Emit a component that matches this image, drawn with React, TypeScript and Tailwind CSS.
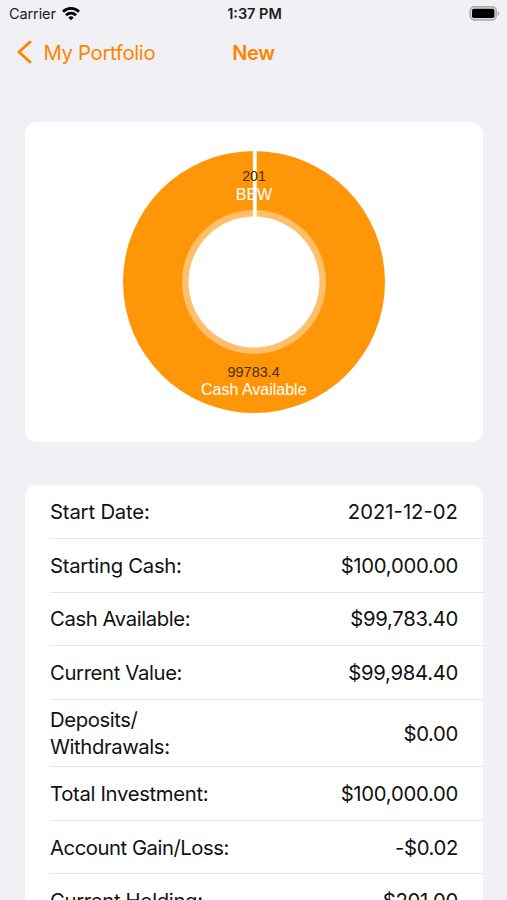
const rows = [
  { label: "Start Date:", labelClass: "tracking-[-0.17px]", value: "2021-12-02", valueClass: "tracking-[0px]" },
  { label: "Starting Cash:", labelClass: "tracking-[-0.28px]", value: "$100,000.00", valueClass: "tracking-[-0.28px]" },
  { label: "Cash Available:", labelClass: "tracking-[-0.4px]", value: "$99,783.40", valueClass: "tracking-[-0.3px]" },
  { label: "Current Value:", labelClass: "tracking-[-0.36px]", value: "$99,984.40", valueClass: "tracking-[-0.3px]" },
  { label: "Deposits/\nWithdrawals:", labelClass: "tracking-[-0.4px]", value: "$0.00", valueClass: "tracking-[-0.35px]" },
  { label: "Total Investment:", labelClass: "tracking-[-0.32px]", value: "$100,000.00", valueClass: "tracking-[-0.28px]" },
  { label: "Account Gain/Loss:", labelClass: "tracking-[-0.47px]", value: "-$0.02", valueClass: "tracking-[-0.35px]" },
  { label: "Current Holding:", labelClass: "tracking-[-0.33px]", value: "$201.00", valueClass: "tracking-[-0.3px]" },
];

function StatusBar() {
  return (
    <div className="grid h-7 grid-cols-3 items-center pl-[9px] pr-[7px] text-[#1c1c1e]">
      <div className="flex items-center gap-[6px]">
        <span className="text-[14.5px] tracking-[-0.1px]">Carrier</span>
        <svg width="18" height="14" viewBox="0 0 18 14" fill="none" stroke="#000" strokeWidth="2.7">
          <path d="M1 4.7a11.4 11.4 0 0 1 16 0" />
          <path d="M4 8.2a7.1 7.1 0 0 1 10 0" />
          <path d="M9 13.2 6.3 10.5a3.9 3.9 0 0 1 5.4 0z" fill="#000" stroke="none" />
        </svg>
      </div>
      <span className="text-center text-[14.5px] font-semibold">1:37 PM</span>
      <svg className="justify-self-end" width="31" height="16" viewBox="0 0 31 16">
        <rect x="1.2" y="0.8" width="26" height="13.2" rx="4" fill="#dcdcde" stroke="#a9a9ac" strokeWidth="1.4" />
        <rect x="3" y="2.7" width="22.4" height="9.4" rx="1.8" fill="#000" />
        <path d="M28.6 5.2c2.2.7 2.2 3.9 0 4.6z" fill="#a9a9ac" />
      </svg>
    </div>
  );
}

function NavBar() {
  return (
    <div className="grid h-12 grid-cols-[1fr_auto_1fr] items-center text-[#ff8400]">
      <div className="flex items-center gap-[11.5px] pl-[17px]">
        <svg width="15" height="24" viewBox="0 0 15 24" fill="none" stroke="currentColor" strokeWidth="2.9" strokeLinecap="round" strokeLinejoin="round">
          <path d="M13 2 2 12l11 10" />
        </svg>
        <span className="whitespace-nowrap pt-0.5 text-[20.3px] tracking-[-0.33px]">My Portfolio</span>
      </div>
      <span className="pt-px text-[20px] font-semibold tracking-[-0.3px]">New</span>
    </div>
  );
}

function AllocationChart() {
  return (
    <svg width="458" height="320" viewBox="0 0 458 320" textAnchor="middle">
      <circle cx="229" cy="160" r="131" fill="#ff9608" />
      <circle cx="229" cy="160" r="72" fill="#ffbf6b" />
      <circle cx="229" cy="160" r="65.5" fill="#fff" />
      <rect x="227.9" y="28" width="3.8" height="68" fill="#fff" />
      <g className="font-['Liberation_Sans',Arial,sans-serif]">
        <text x="229" y="59.2" fontSize="14.2" fill="#4b2d07">201</text>
        <text x="229" y="77.6" fontSize="16" fill="#fff">BBW</text>
        <text x="228.7" y="255" fontSize="14.5" fill="#4b2d07">99783.4</text>
        <text x="228.8" y="273.3" fontSize="16" fill="#fff">Cash Available</text>
      </g>
    </svg>
  );
}

export default function App() {
  return (
    <div className="h-[900px] w-[507px] overflow-hidden bg-[#f1f0f5] font-[Inter,'Liberation_Sans',sans-serif]">
      <StatusBar />
      <NavBar />
      <main className="pl-[25px] pr-6 pt-[46px]">
        <section className="h-80 overflow-hidden rounded-xl bg-white">
          <AllocationChart />
        </section>
        <section className="mt-[43px] rounded-t-xl bg-white pl-[25px]">
          {rows.map((row) => (
            <div key={row.label} className="flex min-h-[53.75px] items-center justify-between border-b border-[#e6e6e9] pb-[5.9px] pr-[25px] pt-[6.1px] text-[20.3px] leading-[27px] text-[#111]">
              <span className={`whitespace-pre-line ${row.labelClass}`}>{row.label}</span>
              <span className={row.valueClass}>{row.value}</span>
            </div>
          ))}
        </section>
      </main>
    </div>
  );
}
